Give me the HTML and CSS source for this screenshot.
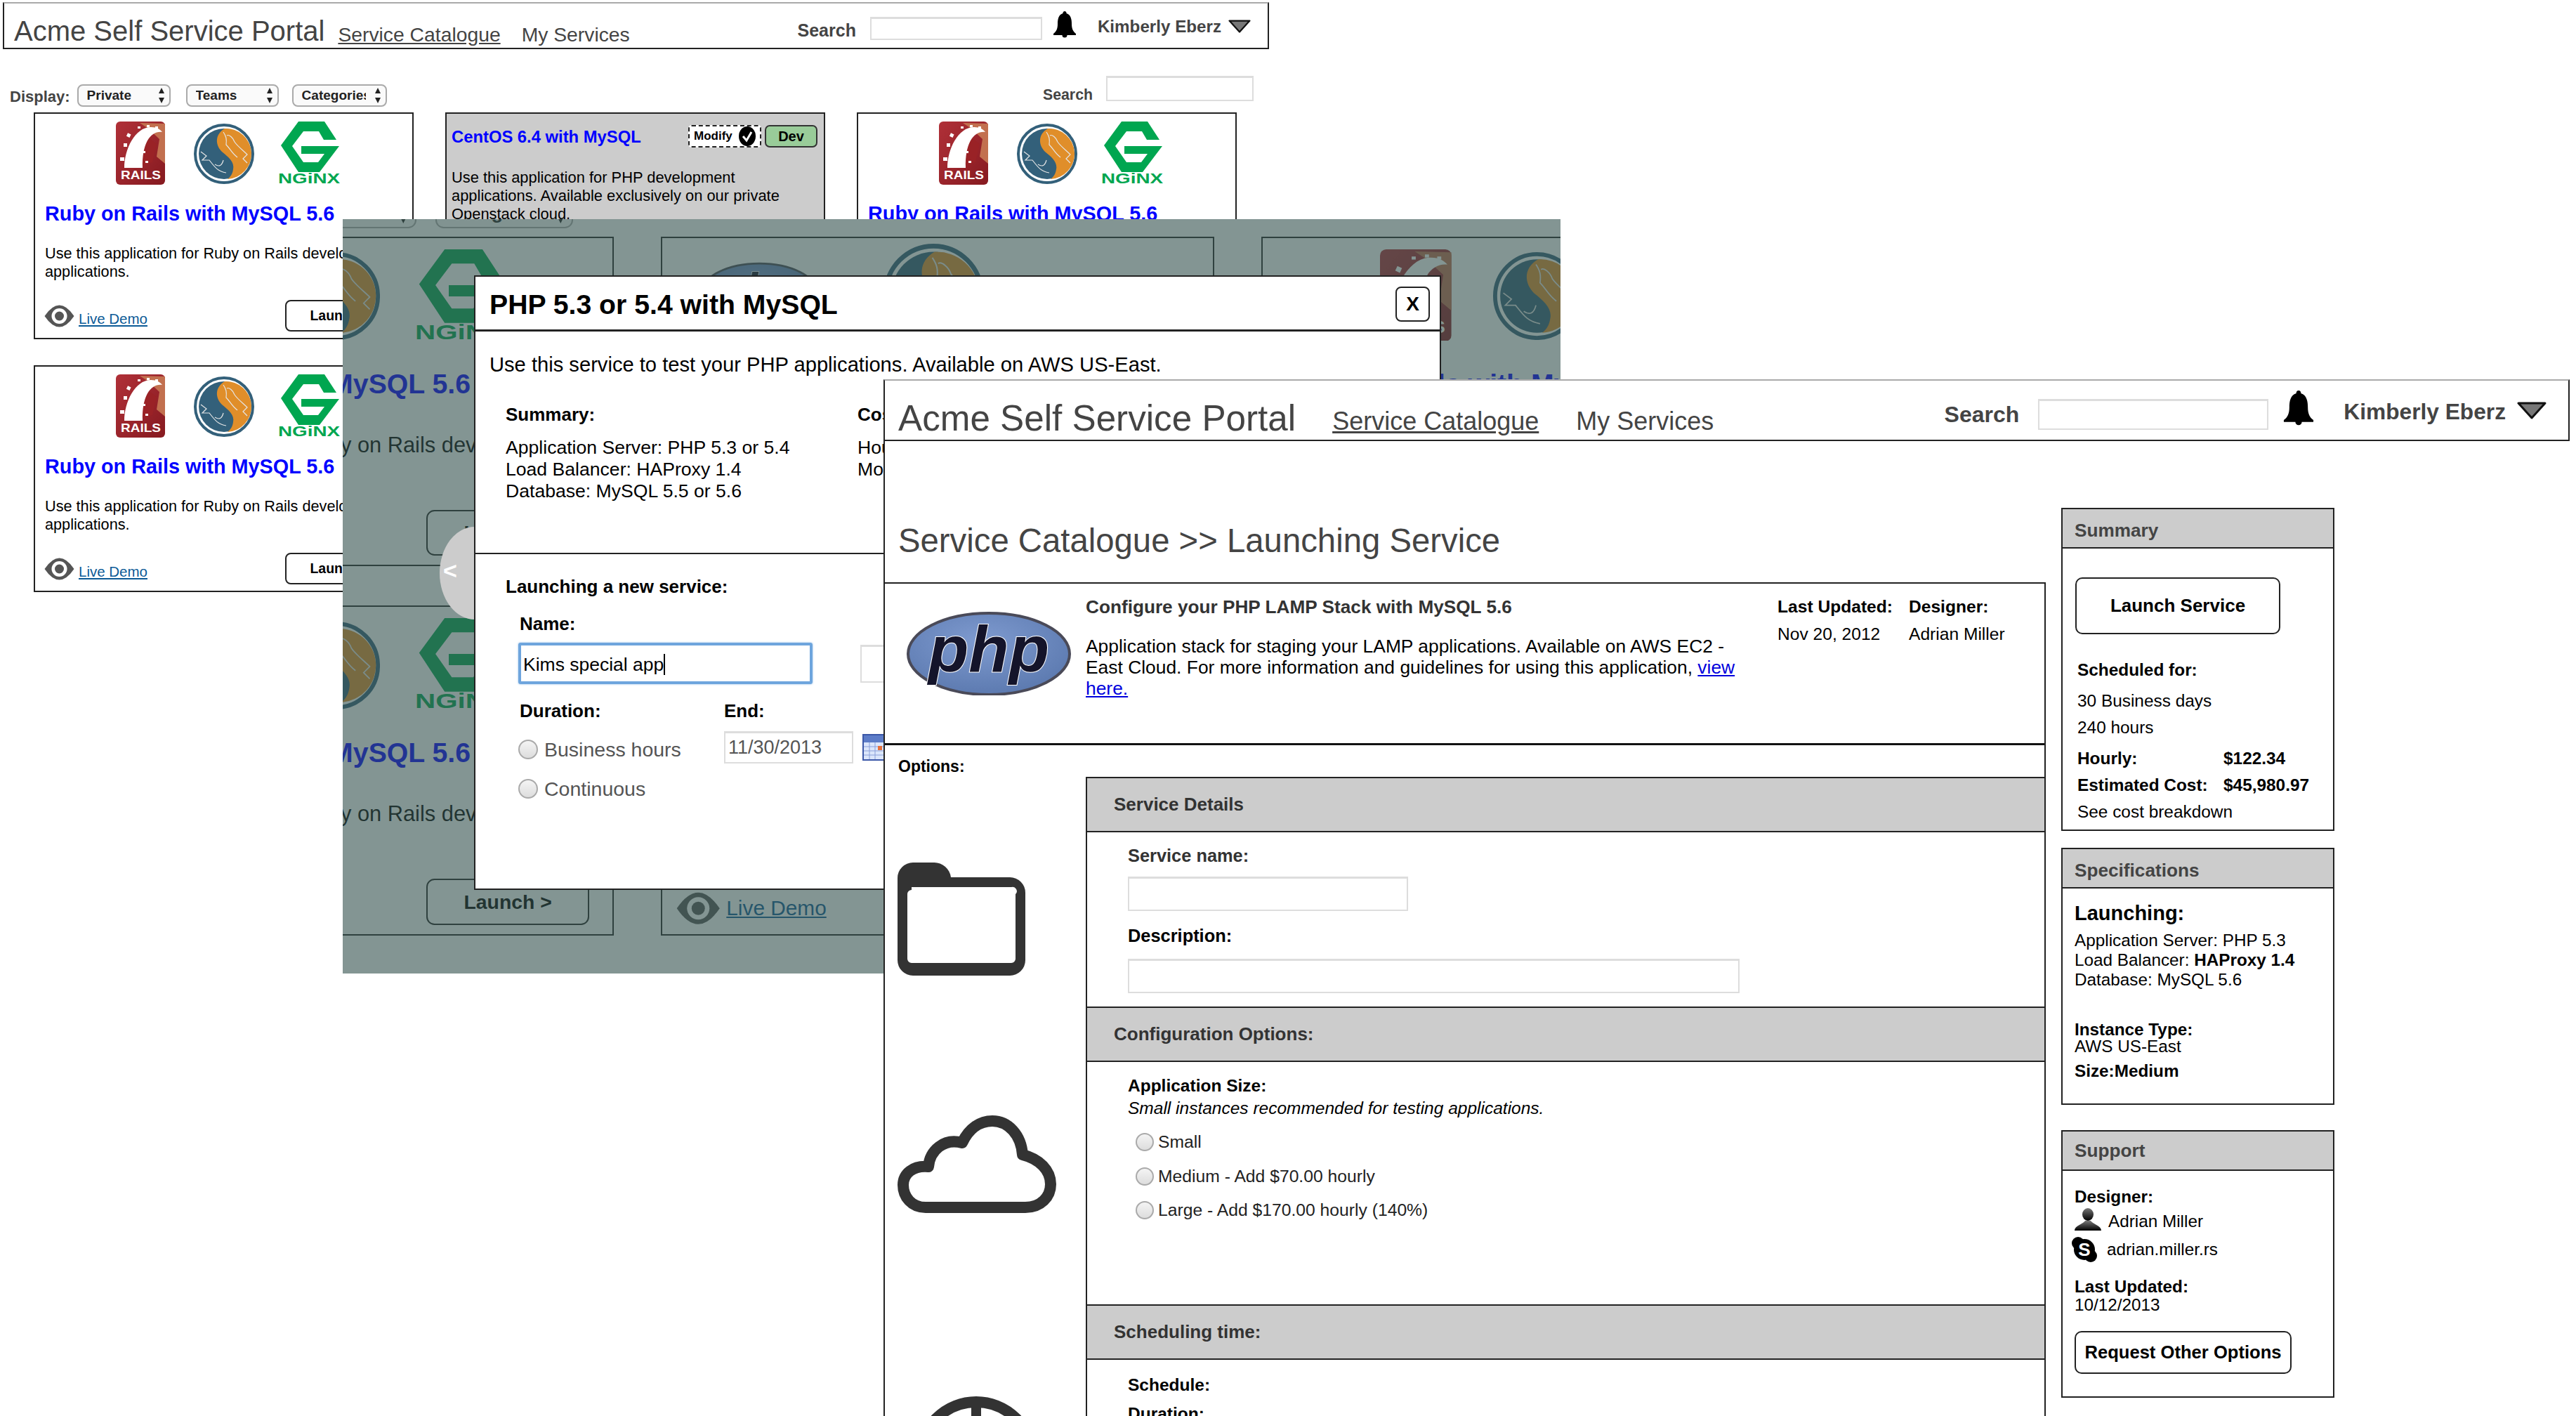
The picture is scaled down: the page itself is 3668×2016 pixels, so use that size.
FILE: index.html
```html
<!DOCTYPE html>
<html lang="en">
<head>
<meta charset="utf-8">
<title>Acme Self Service Portal</title>
<link rel="stylesheet" href="styles.css">
</head>
<body>
<svg class="defs" width="0" height="0" aria-hidden="true">
  <defs>
    <linearGradient id="railsBg" x1="0" y1="0" x2="1" y2="1"><stop offset="0" stop-color="#b03038"/><stop offset="1" stop-color="#861a20"/></linearGradient>
    <linearGradient id="personG" x1="0" y1="0" x2="0" y2="1"><stop offset="0" stop-color="#777"/><stop offset="1" stop-color="#000"/></linearGradient>
    <radialGradient id="phpG" cx=".45" cy=".35" r=".75"><stop offset="0" stop-color="#7f9bd0"/><stop offset="1" stop-color="#5775ab"/></radialGradient>
    <symbol id="rails" viewBox="0 0 70 90">
      <rect width="70" height="90" rx="6" fill="url(#railsBg)"/>
      <path d="M34 2 L70 3 L70 60 L58 50 L62 25 L46 10Z" fill="#c2704f"/>
      <path d="M40 18 L58 32 L52 58 L38 62Z" fill="#9a2226"/>
      <path d="M12 66 C12 40 27 8 50 8 C58 8 63 11 66 15 C50 13 37 30 38 66Z" fill="#fff"/>
      <g fill="#fff"><rect x="16" y="17" width="5" height="5" transform="rotate(25 18 19)"/><rect x="11" y="31" width="5" height="5"/><rect x="6" y="51" width="6" height="5"/><rect x="31" y="7" width="4" height="3"/><rect x="44" y="5" width="4" height="3"/><rect x="56" y="7" width="4" height="3"/><rect x="42" y="22" width="3" height="4"/><rect x="38" y="42" width="4" height="3"/><rect x="42" y="56" width="4" height="3"/></g>
      <text x="7" y="82" class="logo-text" fill="#fff" font-size="17" textLength="57" lengthAdjust="spacingAndGlyphs">RAILS</text>
    </symbol>
    <symbol id="mysql" viewBox="0 0 86 86">
      <circle cx="43" cy="43" r="41" fill="#fff" stroke="#33607a" stroke-width="4"/>
      <circle cx="43" cy="43" r="36" fill="#33607a"/>
      <path d="M44 7 C30 15 30 30 40 40 C50 48 58 55 56 65 C55 72 52 76 48 79 A36 36 0 0 0 44 7Z" fill="#e08e2a"/>
      <path d="M42 12 C46 18 47 22 46 30 C52 36 54 42 62 48 M47 17 C50 15 56 20 58 26 C62 32 70 38 76 44 L70 50 L76 56 M10 40 L18 46 L12 52 L22 52 C30 62 34 68 46 70 M30 58 C36 62 40 60 42 52" fill="none" stroke="#e6e6e6" stroke-width="1.2"/>
    </symbol>
    <symbol id="nginx" viewBox="0 0 88 89">
      <path d="M29 0 L66 0 L83 26 L65 26 L58 14 L36 14 L20 35 L36 58 L57 58 L66 46 L33 46 L33 35 L87 35 L59 72 L29 72 L4 34Z" fill="#00a650"/>
      <text x="0" y="88" class="logo-text" fill="#00a650" font-size="20" textLength="88" lengthAdjust="spacingAndGlyphs">NGiNX</text>
    </symbol>
    <symbol id="eye" viewBox="0 0 42 32">
      <path d="M0 16 Q21 -15 42 16 Q21 47 0 16Z" fill="#555"/>
      <circle cx="21" cy="16" r="11" fill="#fff"/><circle cx="21" cy="16" r="6.5" fill="#555"/>
    </symbol>
    <symbol id="php" viewBox="0 0 235 119">
      <ellipse cx="117" cy="60" rx="115" ry="58" fill="url(#phpG)" stroke="#4a4a58" stroke-width="4"/>
      <text x="117" y="85" text-anchor="middle" class="php-text" font-size="92" textLength="172" lengthAdjust="spacingAndGlyphs">php</text>
    </symbol>
    <symbol id="bell" viewBox="0 0 34 38">
      <path d="M17 0 A2.5 2.5 0 0 1 19.500 3 C26 5 27 12 27 18 C27 25 29 29 33 32 L33 34 L1 34 L1 32 C5 29 7 25 7 18 C7 12 8 5 14.500 3 A2.500 2.500 0 0 1 17 0Z"/>
      <circle cx="17" cy="34" r="3.500"/>
    </symbol>
    <symbol id="caret" viewBox="0 0 42 25"><path d="M2 2 L40 2 L21 23Z" fill="#777" stroke="#111" stroke-width="3" stroke-linejoin="round"/></symbol>
    <symbol id="updown" viewBox="0 0 10 22"><path d="M5 0 L9 8 L1 8Z M5 22 L9 14 L1 14Z" fill="#222"/></symbol>
  </defs>
</svg>

<div class="back-screen">
  <header class="nav nav-sm">
    <div class="brand">Acme Self Service Portal</div>
    <a class="nav-link nav-active">Service Catalogue</a>
    <a class="nav-link">My Services</a>
    <span class="nav-search">Search</span>
    <input class="field nav-input" type="text">
    <svg class="nav-bell"><use href="#bell"/></svg>
    <span class="nav-user">Kimberly Eberz</span>
    <svg class="nav-caret"><use href="#caret"/></svg>
  </header>
  <div class="catalogue catalogue-back">
    <div class="toolbar">
      <span class="display-label">Display:</span>
      <div class="select sel-private"><span class="sel-text">Private</span><svg class="updown"><use href="#updown"/></svg></div>
      <div class="select sel-teams"><span class="sel-text">Teams</span><svg class="updown"><use href="#updown"/></svg></div>
      <div class="select sel-cats"><span class="sel-text">Categories</span><svg class="updown"><use href="#updown"/></svg></div>
      <span class="tool-search">Search</span>
      <input class="field tool-input" type="text">
    </div>
    <div class="cards">
      <article class="card">
        <div class="logos"><svg class="lg-rails"><use href="#rails"/></svg><svg class="lg-mysql"><use href="#mysql"/></svg><svg class="lg-nginx"><use href="#nginx"/></svg></div>
        <h3 class="card-title">Ruby on Rails with MySQL 5.6</h3>
        <p class="card-text">Use this application for Ruby on Rails development applications.</p>
        <div class="card-foot"><div class="demo"><svg class="eye"><use href="#eye"/></svg><a class="demo-link">Live Demo</a></div><div class="launch">Launch &gt;</div></div>
      </article>
      <article class="card card-grey">
        <div class="grey-head"><h3 class="grey-title">CentOS 6.4 with MySQL</h3>
          <div class="modify"><span>Modify</span><svg class="check" viewBox="0 0 24 28"><ellipse cx="12" cy="14" rx="12" ry="14" fill="#000"/><path d="M6 14 L11 20 L18 8" fill="none" stroke="#fff" stroke-width="3"/></svg></div>
          <div class="dev">Dev</div></div>
        <p class="grey-text">Use this application for PHP development applications. Available exclusively on our private Openstack cloud.</p>
      </article>
      <article class="card">
        <div class="logos"><svg class="lg-rails"><use href="#rails"/></svg><svg class="lg-mysql"><use href="#mysql"/></svg><svg class="lg-nginx"><use href="#nginx"/></svg></div>
        <h3 class="card-title">Ruby on Rails with MySQL 5.6</h3>
      </article>
      <article class="card">
        <div class="logos"><svg class="lg-rails"><use href="#rails"/></svg><svg class="lg-mysql"><use href="#mysql"/></svg><svg class="lg-nginx"><use href="#nginx"/></svg></div>
        <h3 class="card-title">Ruby on Rails with MySQL 5.6</h3>
        <p class="card-text">Use this application for Ruby on Rails development applications.</p>
        <div class="card-foot"><div class="demo"><svg class="eye"><use href="#eye"/></svg><a class="demo-link">Live Demo</a></div><div class="launch">Launch &gt;</div></div>
      </article>
    </div>
  </div>
</div>

<div class="overlay">
  <div class="dim-page">
    <div class="catalogue catalogue-dim">
      <div class="toolbar">
        <span class="display-label">Display:</span>
        <div class="select sel-private"><span class="sel-text">Private</span><svg class="updown"><use href="#updown"/></svg></div>
        <div class="select sel-teams"><span class="sel-text">Teams</span><svg class="updown"><use href="#updown"/></svg></div>
        <div class="select sel-cats"><span class="sel-text">Categories</span><svg class="updown"><use href="#updown"/></svg></div>
      </div>
      <div class="cards">
        <article class="card">
          <div class="logos"><svg class="lg-rails"><use href="#rails"/></svg><svg class="lg-mysql"><use href="#mysql"/></svg><svg class="lg-nginx"><use href="#nginx"/></svg></div>
          <h3 class="card-title">Ruby on Rails with MySQL 5.6</h3>
          <p class="card-text">Use this application for Ruby on Rails development applications.</p>
          <div class="card-foot"><div class="demo"><svg class="eye"><use href="#eye"/></svg><a class="demo-link">Live Demo</a></div><div class="launch">Launch &gt;</div></div>
        </article>
        <article class="card">
          <div class="logos logos-php"><svg class="lg-php"><use href="#php"/></svg><svg class="lg-mysql-big"><use href="#mysql"/></svg></div>
        </article>
        <article class="card">
          <div class="logos"><svg class="lg-rails"><use href="#rails"/></svg><svg class="lg-mysql"><use href="#mysql"/></svg><svg class="lg-nginx"><use href="#nginx"/></svg></div>
          <h3 class="card-title">Ruby on Rails with MySQL 5.6</h3>
        </article>
        <article class="card">
          <div class="logos"><svg class="lg-rails"><use href="#rails"/></svg><svg class="lg-mysql"><use href="#mysql"/></svg><svg class="lg-nginx"><use href="#nginx"/></svg></div>
          <h3 class="card-title">Ruby on Rails with MySQL 5.6</h3>
          <p class="card-text">Use this application for Ruby on Rails development applications.</p>
          <div class="card-foot"><div class="demo"><svg class="eye"><use href="#eye"/></svg><a class="demo-link">Live Demo</a></div><div class="launch">Launch &gt;</div></div>
        </article>
        <article class="card">
          <div class="card-foot"><div class="demo"><svg class="eye"><use href="#eye"/></svg><a class="demo-link">Live Demo</a></div></div>
        </article>
      </div>
    </div>
  </div>
  <div class="veil"></div>
  <div class="pager"><span class="pager-mark">&lt;</span></div>

  <section class="modal">
    <div class="modal-head"><h2 class="modal-title">PHP 5.3 or 5.4 with MySQL</h2><div class="modal-close">X</div></div>
    <p class="modal-intro">Use this service to test your PHP applications. Available on AWS US-East.</p>
    <div class="modal-info">
      <div class="info-col">
        <h4 class="m-label">Summary:</h4>
        <p class="info-lines">Application Server: PHP 5.3 or 5.4<br>Load Balancer: HAProxy 1.4<br>Database: MySQL 5.5 or 5.6</p>
      </div>
      <div class="info-col">
        <h4 class="m-label">Cost:</h4>
        <p class="info-lines">Hourly:<br>Monthly:</p>
      </div>
    </div>
    <div class="modal-form">
      <h4 class="m-label">Launching a new service:</h4>
      <h4 class="m-label name-label">Name:</h4>
      <div class="name-row">
        <div class="focus-input"><span class="focus-text">Kims special app</span></div>
        <input class="field second-input" type="text">
      </div>
      <div class="duration">
        <div class="dur-left">
          <h4 class="m-label">Duration:</h4>
          <div class="m-radio m-radio-first"><span class="radio radio-lg"></span>Business hours</div>
          <div class="m-radio"><span class="radio radio-lg"></span>Continuous</div>
        </div>
        <div class="dur-right">
          <h4 class="m-label">End:</h4>
          <div class="date-row">
            <div class="field date-input">11/30/2013</div>
            <svg class="calendar" viewBox="0 0 30 38"><rect x="1" y="1" width="40" height="36" fill="#dbe6fb" stroke="#3c58a8" stroke-width="2"/><rect x="2" y="2" width="40" height="10" fill="#5c7cc8"/><path d="M2 18H30M2 24H30M2 30H30M10 12V36M18 12V36" stroke="#8aa0da"/><rect x="22" y="17" width="6" height="6" fill="#e8703a"/></svg>
          </div>
        </div>
      </div>
    </div>
  </section>
</div>

<main class="front-screen">
  <header class="nav nav-lg">
    <div class="brand">Acme Self Service Portal</div>
    <a class="nav-link nav-active">Service Catalogue</a>
    <a class="nav-link">My Services</a>
    <span class="nav-search">Search</span>
    <input class="field nav-input" type="text">
    <svg class="nav-bell"><use href="#bell"/></svg>
    <span class="nav-user">Kimberly Eberz</span>
    <svg class="nav-caret"><use href="#caret"/></svg>
  </header>
  <div class="front-body">
    <div class="front-main">
      <h1 class="page-title">Service Catalogue &gt;&gt; Launching Service</h1>
      <div class="panel">
        <div class="panel-top">
          <svg class="php-logo"><use href="#php"/></svg>
          <div class="panel-desc">
            <h3 class="desc-title">Configure your PHP LAMP Stack with MySQL 5.6</h3>
            <p class="desc-text">Application stack for staging your LAMP applications. Available on AWS EC2 - East Cloud. For more information and guidelines for using this application, <a class="view-link">view here.</a></p>
          </div>
          <div class="meta meta-updated"><strong>Last Updated:</strong><span>Nov 20, 2012</span></div>
          <div class="meta"><strong>Designer:</strong><span>Adrian Miller</span></div>
        </div>
        <div class="panel-options">
          <div class="opt-rail">
            <div class="opt-label">Options:</div>
            <svg class="ico-folder" viewBox="0 0 182 161"><path d="M0 22 A22 22 0 0 1 22 0 H52 A24 24 0 0 1 76 21 H160 A22 22 0 0 1 182 43 V139 A22 22 0 0 1 160 161 H22 A22 22 0 0 1 0 139Z M20 39 A6 6 0 0 0 14 45 V137 A6 6 0 0 0 20 143 H162 A6 6 0 0 0 168 137 V45 A6 6 0 0 0 162 35 H20Z" fill="#333" fill-rule="evenodd"/></svg>
            <svg class="ico-cloud" viewBox="0 0 226 139"><path d="M40 131 C20 131 8 116 8 99 C8 83 22 71 44 73 C46 50 66 32 92 39 C102 18 118 8 135 8 C158 8 176 28 178 56 C202 62 218 78 218 98 C218 116 204 131 182 131Z" fill="none" stroke="#333" stroke-width="16" stroke-linejoin="round"/></svg>
            <svg class="ico-clock" viewBox="0 0 176 176"><circle cx="88" cy="88" r="80" fill="none" stroke="#333" stroke-width="16"/><path d="M88 8 V40" stroke="#333" stroke-width="14"/></svg>
          </div>
          <div class="sections">
            <section class="section">
              <h3 class="sec-head">Service Details</h3>
              <div class="sec-body sec-details">
                <label class="s-label">Service name:</label>
                <input class="field svc-name" type="text">
                <label class="s-label desc-label">Description:</label>
                <input class="field svc-desc" type="text">
              </div>
            </section>
            <section class="section">
              <h3 class="sec-head">Configuration Options:</h3>
              <div class="sec-body sec-config">
                <label class="s-label s-label-dark">Application Size:</label>
                <div class="s-hint">Small instances recommended for testing applications.</div>
                <div class="s-radios">
                  <div class="s-radio"><span class="radio"></span>Small</div>
                  <div class="s-radio"><span class="radio"></span>Medium - Add $70.00 hourly</div>
                  <div class="s-radio"><span class="radio"></span>Large - Add $170.00 hourly (140%)</div>
                </div>
              </div>
            </section>
            <section class="section">
              <h3 class="sec-head">Scheduling time:</h3>
              <div class="sec-body sec-sched">
                <label class="s-label s-label-dark">Schedule:</label>
                <label class="s-label s-label-dark dur-label">Duration:</label>
              </div>
            </section>
          </div>
        </div>
      </div>
    </div>
    <aside class="side">
      <section class="box box-summary">
        <h3 class="box-head box-head-low">Summary</h3>
        <div class="box-button">Launch Service</div>
        <div class="sum-rows">
          <div class="sum-row"><strong>Scheduled for:</strong></div>
          <div class="sum-row sum-gap">30 Business days</div>
          <div class="sum-row">240 hours</div>
          <div class="sum-row sum-gap sum-cost"><strong>Hourly:</strong><strong>$122.34</strong></div>
          <div class="sum-row sum-cost"><strong>Estimated Cost:</strong><strong>$45,980.97</strong></div>
          <div class="sum-row">See cost breakdown</div>
        </div>
      </section>
      <section class="box box-spec">
        <h3 class="box-head box-head-low">Specifications</h3>
        <div class="box-pad">
          <h4 class="spec-title">Launching:</h4>
          <p class="spec-lines">Application Server: PHP 5.3<br>Load Balancer: <strong>HAProxy 1.4</strong><br>Database: MySQL 5.6</p>
          <p class="spec-inst"><strong>Instance Type:</strong><br>AWS US-East</p>
          <p class="spec-size"><strong>Size:Medium</strong></p>
        </div>
      </section>
      <section class="box box-support">
        <h3 class="box-head">Support</h3>
        <div class="box-pad box-pad-support">
          <div class="sup-label">Designer:</div>
          <div class="sup-person">
            <svg class="ico-person" viewBox="0 0 38 32"><ellipse cx="19" cy="9" rx="8" ry="9" fill="url(#personG)"/><path d="M0 32 C0 25 12 23 15 18 H23 C26 23 38 25 38 32Z" fill="url(#personG)"/></svg>
            <span>Adrian Miller</span>
          </div>
          <div class="sup-skype">
            <svg class="ico-skype" viewBox="0 0 36 36"><circle cx="18" cy="18" r="15"/><circle cx="9" cy="9" r="9"/><circle cx="27" cy="27" r="9"/><text x="18" y="27" text-anchor="middle" class="skype-s" font-size="26">S</text></svg>
            <span>adrian.miller.rs</span>
          </div>
          <div class="sup-updated"><strong>Last Updated:</strong><br>10/12/2013</div>
          <div class="sup-button">Request Other Options</div>
        </div>
      </section>
    </aside>
  </div>
</main>
</body>
</html>
```

FILE: styles.css
```css
* { box-sizing: border-box; }
html, body { margin: 0; padding: 0; }
body {
  position: relative;
  width: 3668px;
  height: 2016px;
  overflow: hidden;
  background: #fff;
  color: #000;
  font-family: "Liberation Sans", Arial, sans-serif;
}
h1, h2, h3, h4, p { margin: 0; font-weight: inherit; font-size: inherit; }
a { color: inherit; }
.defs { position: absolute; }
.logo-text { font-family: "Liberation Sans", sans-serif; font-weight: 700; }
.php-text { font-family: "Liberation Sans", sans-serif; font-weight: 700; font-style: italic; fill: #14142a; stroke: #fff; stroke-width: 2; paint-order: stroke; }
.skype-s { font-family: "Liberation Sans", sans-serif; font-weight: 700; fill: #fff; }

.field { display: block; background: #fff; border: 2px solid #ddd; border-top-width: 3px; margin: 0; padding: 0; border-radius: 0; outline: none; }

/* nav bars */
.nav { display: flex; align-items: flex-start; border: 2px solid #222; border-top-color: #aaa; background: #fff; color: #444; }
.brand, .nav-link, .nav-search, .nav-user { line-height: 1em; white-space: nowrap; }
.nav-active { text-decoration: underline; }
.nav-search, .nav-user { font-weight: 700; }
.nav-search { margin-left: auto; }
.nav-bell { fill: #000; }
.nav-caret { display: block; }

.nav-sm { width: 1803px; height: 67px; margin: 3px 0 0 4px; padding: 0 24px 0 14px; }
.nav-sm .brand { font-size: 40px; margin-top: 19px; margin-right: 19px; }
.nav-sm .nav-link { font-size: 28.300px; margin-top: 30px; margin-right: 30px; }
.nav-sm .nav-search { font-size: 25px; margin-top: 26px; margin-right: 20px; }
.nav-sm .nav-input { width: 245px; height: 33px; margin-top: 19px; margin-right: 15px; }
.nav-sm .nav-bell { width: 34px; height: 38px; margin-top: 11px; margin-right: 30px; }
.nav-sm .nav-user { font-size: 24.2px; margin-top: 21px; margin-right: 10px; }
.nav-sm .nav-caret { width: 32px; height: 19px; margin-top: 23px; }

.nav-lg { width: 2401px; height: 88px; padding: 0 31px 0 19px; }
.nav-lg .brand { font-size: 51.200px; margin-top: 28px; margin-right: 52px; }
.nav-lg .nav-link { font-size: 36px; margin-top: 40px; margin-right: 53px; }
.nav-lg .nav-search { font-size: 32px; margin-top: 32px; margin-right: 27px; }
.nav-lg .nav-input { width: 328px; height: 44px; margin-top: 26px; margin-right: 20px; }
.nav-lg .nav-bell { width: 46px; height: 50px; margin-top: 14px; margin-right: 41px; }
.nav-lg .nav-user { font-size: 31.700px; margin-top: 29px; margin-right: 16px; }
.nav-lg .nav-caret { width: 42px; height: 25px; margin-top: 30px; }

/* back page */
.back-screen { position: absolute; left: 0; top: 0; width: 1810px; }
.catalogue { width: 1807px; }
.catalogue-back { margin-top: 38px; }
.toolbar { display: flex; align-items: flex-start; height: 52px; padding: 0 22px 0 14px; color: #444; }
.display-label { font-size: 22px; line-height: 22px; font-weight: 700; margin-top: 19px; margin-right: 10px; }
.select { display: flex; align-items: center; height: 32px; margin-top: 12px; padding: 0 6px 0 12px; border: 2px solid #aaa; border-radius: 8px; background: #fafafa; color: #222; }
.sel-text { flex: 1; min-width: 0; overflow: hidden; white-space: nowrap; font-size: 19px; font-weight: 700; }
.updown { width: 10px; height: 22px; flex: none; margin-left: 12px; }
.sel-private { width: 133px; margin-right: 22px; }
.sel-teams { width: 132px; margin-right: 19px; }
.sel-cats { width: 135px; }
.tool-search { margin-left: auto; margin-right: 19px; margin-top: 16px; font-size: 21.300px; line-height: 22px; font-weight: 700; }
.tool-input { width: 210px; height: 36px; }
.cards { display: grid; grid-template-columns: repeat(3, 541px); column-gap: 45px; row-gap: 37px; padding-left: 48px; }
.card { display: flex; flex-direction: column; height: 323px; border: 2px solid #222; background: #fff; overflow: hidden; }
.logos { display: flex; align-items: flex-start; padding: 11px 0 0 115px; height: 101px; flex: none; }
.lg-rails { width: 70px; height: 90px; margin-right: 41px; flex: none; }
.lg-mysql { width: 86px; height: 86px; margin-top: 3px; margin-right: 34px; flex: none; }
.lg-nginx { width: 88px; height: 89px; flex: none; }
.logos-php { padding-left: 38px; }
.lg-php { width: 115px; height: 62px; margin-top: 11px; margin-right: 64px; flex: none; }
.lg-mysql-big { width: 98px; height: 98px; margin-top: -5px; flex: none; }
.card-title { margin: 27px 0 0 14px; font-size: 28.800px; line-height: 29px; font-weight: 700; color: #00f; white-space: nowrap; }
.card-text { margin: 29px 0 0 14px; width: 510px; font-size: 21.700px; line-height: 26px; }
.card-foot { display: grid; grid-template-columns: 343px 161px; align-items: center; margin-top: auto; padding: 0 0 9px 13px; }
.demo { display: flex; align-items: center; }
.eye { width: 43px; height: 32px; flex: none; margin-right: 6px; }
.demo-link { color: #0b5a96; font-size: 20.500px; line-height: 24px; text-decoration: underline; margin-top: 8px; }
.launch { display: flex; align-items: center; justify-content: center; height: 45px; padding-right: 4px; border: 2px solid #222; border-radius: 8px; background: #fff; font-size: 19.500px; font-weight: 700; }
.card-grey { background: #ccc; }
.grey-head { display: grid; grid-template-columns: 337px 104px 75px; column-gap: 0; margin: 16px 0 0 7px; flex: none; height: 32px; }
.grey-title { padding-top: 5px; font-size: 23.800px; line-height: 24px; font-weight: 700; color: #00f; white-space: nowrap; }
.modify { display: flex; align-items: center; justify-content: space-between; height: 32px; padding: 0 6px; border: 2px dashed #222; border-radius: 5px; background: #fff; font-size: 17px; font-weight: 700; }
.check { width: 24px; height: 28px; flex: none; }
.dev { display: flex; align-items: center; justify-content: center; height: 32px; margin-left: 5px; width: 75px; border: 2px solid #333; border-radius: 7px; background: #9c9; font-size: 20px; font-weight: 700; }
.grey-text { margin: 30px 0 0 7px; width: 492px; font-size: 21.900px; line-height: 26px; }

/* dimmed background window */
.overlay { position: absolute; left: 488px; top: 312px; width: 1734px; height: 1074px; overflow: hidden; background: #fff; }
.dim-page { position: absolute; left: -472px; top: -51px; }
.catalogue-dim { zoom: 1.454; }
.catalogue-dim .cards { grid-template-columns: repeat(3, 542px); column-gap: 46px; row-gap: 38.500px; }
.catalogue-dim .card-title { font-size: 27px; }
.catalogue-dim .card-text { margin-top: 33px; font-size: 21.200px; }
.catalogue-dim .card-foot { grid-template-columns: 344px 160px; }
.catalogue-dim .eye { margin-left: 1px; }
.catalogue-dim .demo-link { margin-top: 0; }
.catalogue-dim .launch { padding-right: 0; }
.veil { position: absolute; inset: 0; background: rgba(55, 84, 80, .62); }
.pager { position: absolute; left: 138px; top: 438px; width: 100px; height: 132px; border-radius: 50%; background: #ccc; }
.pager-mark { display: block; margin: 42px 0 0 5px; color: #fff; font-size: 34px; line-height: 40px; font-weight: 700; }

/* modal */
.modal { position: absolute; left: 187px; top: 80px; width: 1377px; height: 875px; border: 2px solid #222; background: #fff; }
.modal-head { display: flex; align-items: center; justify-content: space-between; height: 78px; padding: 0 14px 0 20px; border-bottom: 3px solid #222; }
.modal-title { margin-top: 4px; font-size: 39.200px; line-height: 44px; font-weight: 700; }
.modal-close { display: flex; align-items: center; justify-content: center; width: 49px; height: 50px; margin-top: 2px; border: 2px solid #222; border-radius: 8px; font-size: 28px; font-weight: 700; }
.modal-intro { padding: 33px 0 0 20px; font-size: 29.150px; line-height: 29px; }
.modal-info { display: flex; height: 255px; padding: 43px 0 0 43px; border-bottom: 2px solid #222; }
.info-col { width: 501px; flex: none; }
.m-label { font-size: 26px; line-height: 26px; font-weight: 700; }
.info-lines { margin-top: 19px; font-size: 26.600px; line-height: 31px; }
.modal-form { padding: 33px 0 0 43px; }
.name-label { margin: 27px 0 0 20px; }
.name-row { display: flex; align-items: center; margin: 14px 0 0 18px; }
.focus-input { display: flex; align-items: center; width: 419px; height: 59px; padding: 2px 0 0 3px; border: 4px solid #6ea5dd; border-radius: 3px; box-shadow: 0 0 3px #9cc3ea; font-size: 26.500px; }
.focus-text { border-right: 2px solid #000; padding-right: 0; line-height: 30px; }
.second-input { width: 200px; height: 54px; margin-left: 68px; }
.duration { display: flex; margin: 25px 0 0 20px; }
.dur-left { width: 291px; flex: none; }
.m-radio { display: flex; align-items: center; height: 56px; margin-left: -2px; color: #555; font-size: 28.500px; }
.m-radio-first { margin-top: 14px; }
.radio { display: block; flex: none; border-radius: 50%; border: 2px solid #aaa; background: linear-gradient(#f4f4f4, #ddd); width: 26px; height: 26px; margin-right: 6px; }
.radio-lg { width: 28px; height: 28px; margin-right: 9px; }
.date-row { display: flex; align-items: center; margin-top: 16px; }
.date-input { width: 184px; height: 46px; padding-left: 4px; font-size: 27px; line-height: 40px; color: #555; }
.calendar { width: 30px; height: 38px; margin-left: 13px; flex: none; }

/* front window */
.front-screen { position: absolute; left: 1258px; top: 540px; width: 2410px; height: 1476px; overflow: hidden; background: #fff; }
.front-screen .nav { margin: 0; }
.front-body { display: flex; align-items: flex-start; }
.front-main { width: 1655px; flex: none; border-left: 2px solid #222; }
.page-title { padding: 118px 0 0 19px; height: 201px; font-size: 47.300px; line-height: 47px; color: #444; font-weight: 400; white-space: nowrap; }
.panel { border-top: 2px solid #222; border-right: 2px solid #222; }
.panel-top { display: flex; align-items: flex-start; height: 230px; border-bottom: 3px solid #111; }
.php-logo { width: 235px; height: 119px; margin: 40px 20px 0 31px; flex: none; }
.panel-desc { width: 930px; margin-right: 55px; flex: none; padding-top: 20px; }
.desc-title { font-size: 26.200px; line-height: 26px; font-weight: 700; color: #333; white-space: nowrap; }
.desc-text { margin-top: 28px; font-size: 26.400px; line-height: 30px; }
.view-link { color: #00d; text-decoration: underline; }
.meta { display: flex; flex-direction: column; padding-top: 21px; font-size: 24.600px; line-height: 24px; white-space: nowrap; }
.meta span { margin-top: 15px; }
.meta-updated { width: 187px; }
.panel-options { display: flex; align-items: flex-start; }
.opt-rail { width: 286px; flex: none; padding: 18px 0 0 18px; }
.opt-label { padding-left: 1px; font-size: 23px; line-height: 24px; font-weight: 700; }
.ico-folder { display: block; width: 182px; height: 161px; margin-top: 125px; }
.ico-cloud { display: block; width: 226px; height: 139px; margin-top: 199px; }
.ico-clock { display: block; width: 176px; height: 176px; margin: 261px 0 0 24px; }
.sections { flex: 1; margin-top: 45px; border-left: 2px solid #222; }
.sec-head { display: flex; align-items: center; height: 79px; padding: 0 0 0 38px; background: #ccc; border-top: 2px solid #222; border-bottom: 2px solid #222; font-size: 26px; font-weight: 700; color: #333; }
.sec-body { padding: 0 0 0 58px; }
.s-label { display: block; font-size: 25.400px; line-height: 25px; font-weight: 700; color: #333; }
.s-label-dark { color: #000; font-size: 24.500px; }
.sec-details { height: 248px; padding-top: 21px; }
.svc-name { width: 399px; height: 49px; margin-top: 17px; }
.desc-label { margin-top: 23px; color: #000; }
.svc-desc { width: 871px; height: 49px; margin-top: 20px; }
.sec-config { height: 345px; padding-top: 21px; }
.s-hint { margin-top: 7px; font-size: 24.500px; line-height: 25px; font-style: italic; }
.s-radios { margin: 12px 0 0 11px; }
.s-radio { display: flex; align-items: center; height: 48.500px; font-size: 24.700px; color: #222; }
.sec-sched { padding-top: 23px; }
.dur-label { margin-top: 16px; }

/* sidebar */
.side { width: 389px; flex: none; margin: 95px 0 0 22px; }
.box { border: 2px solid #222; background: #fff; }
.box-head { display: flex; align-items: center; height: 56px; padding: 0 0 0 17px; background: #ccc; border-bottom: 2px solid #222; font-size: 26.200px; font-weight: 700; color: #444; }
.box-head-low { padding-top: 6px; }
.box-summary { height: 460px; }
.box-spec { height: 366px; margin-top: 24px; }
.box-support { height: 381px; margin-top: 36px; }
.box-button { display: flex; align-items: center; justify-content: center; width: 292px; height: 81px; margin: 41px 0 0 18px; border: 2px solid #222; border-radius: 10px; font-size: 26px; font-weight: 700; }
.sum-rows { margin: 32px 0 0 21px; }
.sum-row { height: 38px; font-size: 24.400px; line-height: 38px; white-space: nowrap; }
.sum-gap { margin-top: 6px; }
.sum-cost { display: grid; grid-template-columns: 208px auto; }
.box-pad { padding: 21px 0 0 17px; }
.box-pad-support { padding-top: 25px; }
.spec-title { font-size: 29px; line-height: 29px; font-weight: 700; }
.spec-lines { margin-top: 10px; font-size: 24.300px; line-height: 28px; }
.spec-inst { margin-top: 45px; font-size: 24.300px; line-height: 24px; }
.spec-size { margin-top: 11px; font-size: 24.300px; line-height: 24px; }
.sup-label { font-size: 24.300px; line-height: 24px; font-weight: 700; }
.sup-person { display: flex; align-items: flex-end; height: 36px; margin-top: 0; font-size: 24.300px; line-height: 26px; }
.ico-person { width: 38px; height: 32px; margin-right: 10px; flex: none; }
.sup-skype { display: flex; align-items: center; height: 36px; margin: 9px 0 0 -4px; font-size: 24.300px; }
.ico-skype { width: 36px; height: 36px; margin-right: 14px; flex: none; }
.sup-updated { margin-top: 22px; font-size: 24.300px; line-height: 26px; }
.sup-button { display: flex; align-items: center; justify-content: center; width: 309px; height: 61px; margin-top: 24px; border: 2px solid #222; border-radius: 10px; font-size: 25.600px; font-weight: 700; }
```
